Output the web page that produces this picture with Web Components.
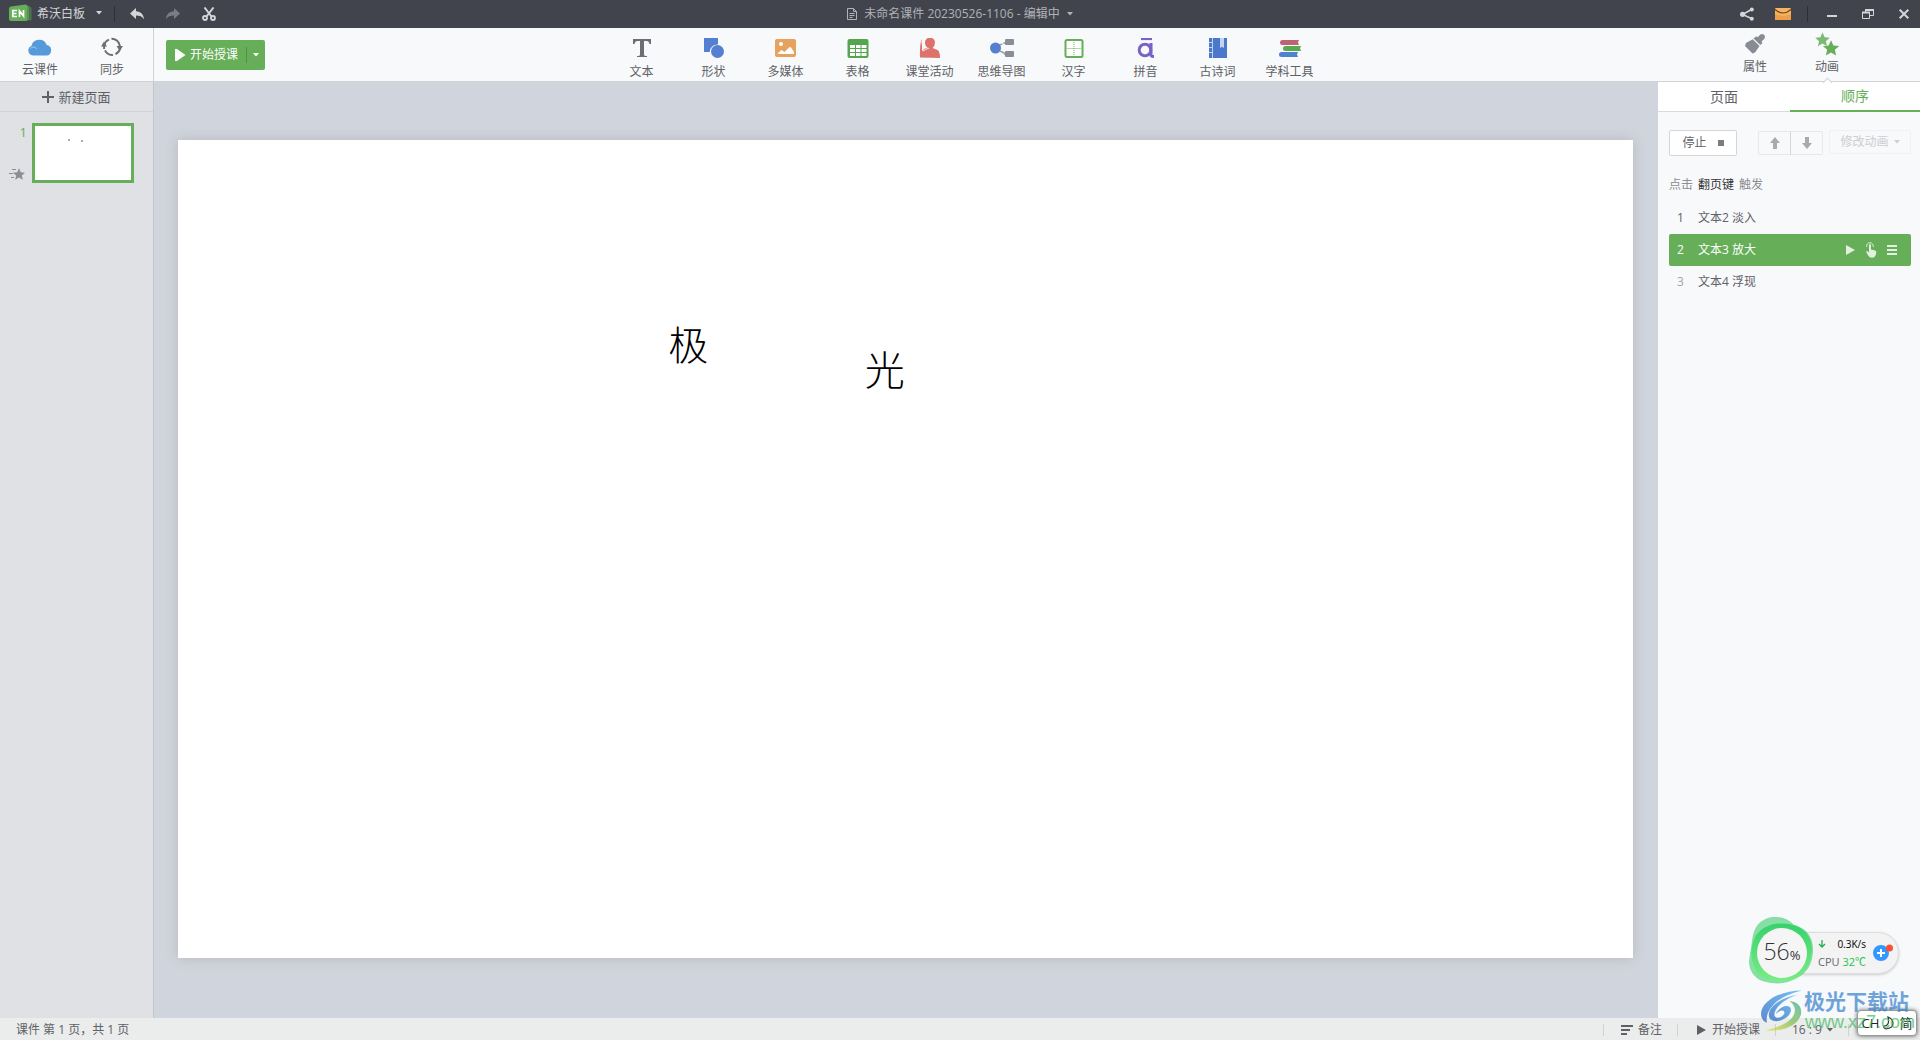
<!DOCTYPE html>
<html lang="zh-CN">
<head>
<meta charset="utf-8">
<title>希沃白板</title>
<style>
  html, body { height: 100%; }
  body {
    margin: 0;
    font: 12px/16px "Open Sans", "Noto Sans CJK SC", sans-serif;
    color: #5f6166;
    --green: #66ae58;
    --line: #d0d2d6;
    --bar: #f7f9fb;
  }
</style>
</head>
<body>
<board-app></board-app>
<script>
const RESET = `
  *, *::before, *::after { box-sizing: border-box; }
  button { font: inherit; color: inherit; background: none; border: 0; padding: 0; margin: 0; cursor: pointer; }
  :host([hidden]) { display: none; }
`;

class BaseElement extends HTMLElement {
  connectedCallback() {
    if (this.shadowRoot) return;
    const tpl = document.createElement('template');
    tpl.innerHTML = `<style>${RESET}${this.styles()}</style>${this.markup()}`;
    this.attachShadow({ mode: 'open' }).append(tpl.content.cloneNode(true));
  }
  styles() { return ''; }
  markup() { return '<slot></slot>'; }
}

const star = 'M0-10 2.9-3.6 9.8-3 4.6 1.6 6.2 8.4 0 4.8-6.2 8.4-4.6 1.6-9.8-3-2.9-3.6Z';

/* name: [width, height, markup] */
const ICONS = {
  logo: [24, 18, '<path d="M21 2.5l1.5 1v12L21 17z" fill="#4e7350"/><path d="M17.500 1l3 1.500v13.500l-3 1z" fill="#5b9156"/><path d="M2 2.500 16.500.500q1.500 0 1.500 1.500v13.500q0 1.500-1.500 1.500H2q-2 0-2-2V4.500q0-1.700 2-2z" fill="#66ae58"/><path d="M8 6.500H3.800v6H8M3.800 9.500h3.700M10.500 13V7l4 5V6" fill="none" stroke="#fff" stroke-width="1.700"/>'],
  caret: [6, 4, '<path d="M0 0h6L3 3.500z" fill="currentColor"/>'],
  undo: [14, 12, '<path d="M6 0v3.200c5 .3 7.600 3.300 8 8-1.800-2.500-4-3.600-8-3.600V11L0 5.400z" fill="currentColor"/>'],
  redo: [14, 12, '<path d="M8 0v3.200c-5 .3-7.600 3.300-8 8 1.800-2.500 4-3.600 8-3.600V11l6-5.600z" fill="currentColor"/>'],
  cut: [14, 14, '<path d="M2.500.500 9.500 9.500M11.500.500 4.500 9.500" stroke="currentColor" stroke-width="2"/><circle cx="3" cy="11" r="2" fill="none" stroke="currentColor" stroke-width="1.800"/><circle cx="11" cy="11" r="2" fill="none" stroke="currentColor" stroke-width="1.800"/>'],
  doc: [10, 12, '<path d="M.500.500h6l3 3v8h-9zM6.500.500v3h3M2.500 5.500h5M2.500 7.500h5M2.500 9.500h3" fill="none" stroke="currentColor"/>'],
  share: [14, 14, '<path d="M11.500 2.500 2.500 7.500l9 4" fill="none" stroke="currentColor" stroke-width="1.500"/><circle cx="11.800" cy="2.400" r="2" fill="currentColor"/><circle cx="2.600" cy="7.300" r="2.600" fill="currentColor"/><circle cx="11.800" cy="11.700" r="2" fill="currentColor"/>'],
  mail: [16, 12, '<rect width="16" height="12" rx="1" fill="#f9b35c"/><path d="M0 12V6l8 2 8-2v6z" fill="#eda04a"/><path d="M0 1.500Q4 5 8 5t8-3.500" fill="none" stroke="#5c4631" stroke-width="1.200"/>'],
  min: [10, 12, '<path d="M0 8h10" stroke="currentColor" stroke-width="2"/>'],
  restore: [12, 10, '<path d="M3.500 3V.500h8v6H8" fill="none" stroke="currentColor"/><path d="M0 3.500h8" stroke="currentColor" stroke-width="2"/><path d="M.500 3.500h7v6h-7z" fill="none" stroke="currentColor"/><path d="M3 1h9" stroke="currentColor" stroke-width="2"/>'],
  close: [10, 10, '<path d="M.700.700l8.600 8.600M9.300.700.700 9.300" stroke="currentColor" stroke-width="2"/>'],
  cloud: [24, 17, '<path d="M5 16.500a5 5 0 0 1-1.600-9.600 8 8 0 0 1 15.300-.8A5.300 5.300 0 0 1 19 16.500z" fill="#559bdb"/><path d="M2.500 9.500c2.500-2.300 5-1.500 6.200.500" fill="none" stroke="#a9cdf0" stroke-width="1"/>'],
  sync: [22, 20, '<path d="M3.100 12V9.500A8 8 0 0 1 8 2.600M10.500 1.800a8 8 0 0 1 8.200 6.700v2M18.900 12a8 8 0 0 1-4.500 5.200M12 17.900a8 8 0 0 1-8-4.500" fill="none" stroke="#6c6e73" stroke-width="2"/><path d="M0 9.500 3 4.500l3 5zM15.500 9h6.500l-3.200 5z" fill="#6c6e73"/>'],
  playWhite: [11, 12, '<path d="M0 0h2l8.500 6L2 12H0z" fill="currentColor"/>'],
  text: [20, 20, '<path d="M1 1h18v5h-1.500Q17 3 14.500 3H12v13.500q0 1.500 3 1.500v1H5v-1q3 0 3-1.500V3H5.500Q3 3 2.500 6H1z" fill="#6c6e73"/>'],
  shape: [20, 20, '<path d="M0 0h14v6.500A7.500 7.500 0 0 0 5.700 14H0z" fill="#557fd0"/><circle cx="13.500" cy="13.500" r="6.500" fill="#557fd0"/>'],
  media: [22, 20, '<rect y="1" width="21" height="18" rx="2" fill="#e6a25e"/><circle cx="6" cy="6" r="2" fill="#fff"/><path d="M3 16v-1l3.500-3 3 2 4.500-4.500q1-.8 2 0l3 4.500v2z" fill="#fff"/>'],
  table: [22, 20, '<rect x=".500" y="1" width="21" height="19" rx="2" fill="#55a54e"/><path d="M3 7h5v3H3zM9 7h4.500v3H9zM14.500 7h5v3h-5zM3 11h5v3H3zM9 11h4.500v3H9zM14.500 11h5v3h-5zM3 15h5v3H3zM9 15h4.500v3H9zM14.500 15h5v3h-5z" fill="#fff"/>'],
  activity: [22, 20, '<path d="M1 19.500Q.500 10 2 2.500l1-1v11l3-2 3-.500q-3-2-3-5.500a4.800 4.800 0 0 1 10 0q0 3.500-2.500 5.500l5 2q2.500 1.500 2.500 8z" fill="#db736c"/><path d="M2.500 2.500Q4 8 3.800 13l5.500-2.800 1 1" fill="none" stroke="#f7f9fb" stroke-width=".8"/>'],
  mind: [24, 20, '<path d="M5 9 17 4M14 16l3 .500M10 13l6 3" stroke="#9aa0a8" stroke-width="1.500" stroke-dasharray="8 1"/><circle cx="5.500" cy="10" r="5.500" fill="#557fd0"/><rect x="15" y="1" width="9" height="6" rx="1" fill="#888e98"/><rect x="15" y="13" width="9" height="6" rx="1" fill="#888e98"/>'],
  hanzi: [20, 20, '<rect x="1.500" y="2" width="17" height="17" rx="1.500" fill="#fff" stroke="#66ae58" stroke-width="2"/><path d="M10 4v13M3.500 10.500h13" stroke="#66ae58" stroke-dasharray="1 1"/>'],
  pinyin: [18, 20, '<path d="M4 1h11" stroke="#7a62c9" stroke-width="2.200"/><circle cx="8" cy="12" r="5.800" fill="none" stroke="#7a62c9" stroke-width="3"/><path d="M14 5v12q0 1.600 3 1.500" fill="none" stroke="#7a62c9" stroke-width="3"/>'],
  poem: [18, 20, '<path d="M0 0h18v20H0z" fill="#4c78cc"/><path d="M3.500 0v20M0 4.500h3M0 9.500h3M0 14.500h3" stroke="#c3d2ef"/><path d="M11 0h4v10l-2-1.300L11 10z" fill="#c6d4f0"/>'],
  tools: [22, 20, '<path d="M3.500 2h16.500l-1 2.500 1 2.500H3.500a2.500 2.500 0 0 1 0-5z" fill="#bf6276"/><path d="M6.500 8h15.500l-1 2.500 1 2.500H6.500a2.500 2.500 0 0 1 0-5z" fill="#57ab4d"/><path d="M2.500 14h16.500l-1 2.500 1 2.500H2.500a2.500 2.500 0 0 1 0-5z" fill="#5480d2"/>'],
  brush: [20, 20, '<path d="M18 0l2 2-.500 2.800-3 2.700 1 1.500-2.200 2L8.500 4.500 11 2.500l2 .500 2.300-2.500z" fill="#888b91"/><path d="M7.700 5.200l6.800 6.800-4.500 6.500-2.500 1L0 12l1-3z" fill="#888b91"/>'],
  stars: [24, 24, `<path transform="translate(7.500 8) scale(.74)" d="${star}" fill="#66ae58" opacity=".85"/><path transform="translate(16 16.500) scale(.83)" d="${star}" fill="#66ae58" stroke="#f7f9fb" stroke-width="1.500" paint-order="stroke"/>`],
  plus: [12, 12, '<path d="M6 0v12M0 6h12" stroke="#5f6166" stroke-width="2"/>'],
  flyStar: [16, 12, `<path transform="translate(10 6.500) scale(.62)" d="${star}" fill="#8b8e94"/><path d="M3 1.500h4M0 5.500h4M2 9.500h3" stroke="#8b8e94"/>`],
  stop: [6, 6, '<path d="M0 0h6v6H0z" fill="#7c7c7c"/>'],
  up: [10, 12, '<path d="M5 0l5 6H7v6H3V6H0z" fill="#a8aaac"/>'],
  down: [10, 12, '<path d="M5 12 0 6h3V0h4v6h3z" fill="#a8aaac"/>'],
  play: [9, 10, '<path d="M0 0l9 5-9 5z" fill="currentColor"/>'],
  tap: [12, 16, '<path d="M4 8V2.800q1-1.600 2 0V7.500l4 1q1.500.500 1.300 2-.3 2.800-1.800 4.500Q7 16.500 4.500 15 2 12.500 1.200 9.500l1-.500L4 10.500z" fill="currentColor"/><path d="M1.800 5a3.300 3.300 0 1 1 6.300 0" fill="none" stroke="currentColor"/>'],
  menu: [10, 10, '<path d="M0 1h10M0 5h10M0 9h10" stroke="currentColor" stroke-width="2"/>'],
  notes: [12, 10, '<path d="M0 1h12M0 5h9M0 9h6" stroke="currentColor" stroke-width="2"/>'],
  arrowDown: [8, 8, '<path d="M4 0v7M1 4l3 3 3-3" fill="none" stroke="#1fb04a" stroke-width="1.300"/>'],
  add: [20, 17, '<circle cx="8" cy="9" r="8" fill="#3397ff"/><path d="M8 5v8M4 9h8" stroke="#fff" stroke-width="2"/><circle cx="16.500" cy="4" r="3.500" fill="#fb5032"/>'],
  moon: [12, 14, '<path d="M5 1q5 2 5 6.500T3 13Q0 12 1 10q6 0 4-9z" fill="none" stroke="#333" stroke-width="1.200"/>']
};

customElements.define('ui-icon', class extends BaseElement {
  styles() { return ':host { display: inline-flex; flex: none; } svg { display: block; }'; }
  markup() {
    const [w, h, body] = ICONS[this.getAttribute('name')];
    return `<svg width="${w}" height="${h}" viewBox="0 0 ${w} ${h}" aria-hidden="true">${body}</svg>`;
  }
});

customElements.define('title-bar', class extends BaseElement {
  styles() { return `
    :host { display: grid; grid-template-columns: 1fr auto 1fr; height: 28px; background: #42444d; color: #d5d6da; }
    div { display: flex; align-items: center; }
    button { display: flex; align-items: center; justify-content: center; height: 28px; }
    .tools { gap: 4px; }
    .tools button { width: 32px; }
    .tools .brand { gap: 4px; width: auto; padding-left: 9px; margin-right: 8px; }
    .brand span { margin-right: 7px; }
    .brand ui-icon { margin-top: -2px; }
    .sep { width: 1px; height: 16px; background: #2d2f36; margin: 0 4px; }
    .lead .sep { margin: 0 2px 0 0; }
    .end { justify-content: flex-end; }
    .off { color: #7b7d85; }
    .name { gap: 7px; color: #b0b2b8; }
  `; }
  markup() { return `
    <div class="tools lead">
      <button class="brand"><ui-icon name="logo"></ui-icon><span>希沃白板</span><ui-icon name="caret"></ui-icon></button>
      <span class="sep"></span>
      <button aria-label="撤销"><ui-icon name="undo"></ui-icon></button>
      <button aria-label="重做" class="off" disabled><ui-icon name="redo"></ui-icon></button>
      <button aria-label="剪切"><ui-icon name="cut"></ui-icon></button>
    </div>
    <button class="name"><ui-icon name="doc"></ui-icon><span>未命名课件 20230526-1106 - 编辑中</span><ui-icon name="caret"></ui-icon></button>
    <div class="tools end">
      <button aria-label="分享"><ui-icon name="share"></ui-icon></button>
      <button aria-label="消息"><ui-icon name="mail"></ui-icon></button>
      <span class="sep"></span>
      <button aria-label="最小化"><ui-icon name="min"></ui-icon></button>
      <button aria-label="还原"><ui-icon name="restore"></ui-icon></button>
      <button aria-label="关闭"><ui-icon name="close"></ui-icon></button>
    </div>`; }
});

customElements.define('tool-item', class extends BaseElement {
  styles() { return `
    :host { display: block; width: 72px; }
    button { display: flex; flex-direction: column; align-items: center; width: 100%; gap: var(--tool-gap, 4px); }
    ui-icon { height: 22px; align-items: center; }
  `; }
  markup() { return `<button><ui-icon name="${this.getAttribute('icon')}"></ui-icon><span><slot></slot></span></button>`; }
});

customElements.define('start-button', class extends BaseElement {
  styles() { return `
    :host { display: flex; align-items: center; height: 30px; border-radius: 2px; background: var(--green); color: #fff; }
    button { display: flex; align-items: center; justify-content: center; height: 30px; }
    .go { gap: 4px; padding: 0 8px 0 9px; }
    .more { width: 19px; height: 16px; border-left: 1px solid #528f47; }
  `; }
  markup() { return `<button class="go"><ui-icon name="playWhite"></ui-icon><slot></slot></button><button class="more" aria-label="更多"><ui-icon name="caret"></ui-icon></button>`; }
});

customElements.define('tool-bar', class extends BaseElement {
  styles() { return `
    :host { display: grid; grid-template-columns: 1fr auto 1fr; height: 54px; background: var(--bar); border-bottom: 1px solid var(--line); }
    div { display: flex; align-items: flex-start; }
    .file { width: 154px; height: 53px; padding: 8px 0 0 4px; border-right: 1px solid var(--line); }
    .lead { gap: 12px; }
    .lead start-button { margin-top: 12px; }
    .insert { padding: 9px 0 0 11px; --tool-gap: 5px; }
    .end { justify-content: flex-end; padding: 5px 57px 0 0; }
    .active { position: relative; }
    .active::after { content: ""; position: absolute; left: 33px; top: 46px; width: 7px; height: 7px; transform: rotate(45deg); background: #fff; border: solid var(--line); border-width: 1px 0 0 1px; }
  `; }
  markup() { return `
    <div class="lead">
      <div class="file"><tool-item icon="cloud">云课件</tool-item><tool-item icon="sync">同步</tool-item></div>
      <start-button>开始授课</start-button>
    </div>
    <div class="insert">
      <tool-item icon="text">文本</tool-item><tool-item icon="shape">形状</tool-item><tool-item icon="media">多媒体</tool-item>
      <tool-item icon="table">表格</tool-item><tool-item icon="activity">课堂活动</tool-item><tool-item icon="mind">思维导图</tool-item>
      <tool-item icon="hanzi">汉字</tool-item><tool-item icon="pinyin">拼音</tool-item><tool-item icon="poem">古诗词</tool-item><tool-item icon="tools">学科工具</tool-item>
    </div>
    <div class="end"><tool-item icon="brush">属性</tool-item><tool-item class="active" icon="stars">动画</tool-item></div>`; }
});

customElements.define('page-list', class extends BaseElement {
  styles() { return `
    :host { display: block; width: 154px; background: #dfe1e5; border-right: 1px solid #c3c6cc; }
    .new { display: flex; align-items: center; justify-content: center; gap: 4px; width: 100%; height: 30px; font-size: 13px; border-bottom: 1px solid var(--line); }
    .page { display: grid; grid-template-columns: 18px 102px; gap: 5px; padding: 11px 0 0 9px; }
    .side { display: flex; flex-direction: column; justify-content: space-between; color: var(--green); padding: 1px 0 3px; }
    .side span { font-size: 13px; align-self: flex-end; }
    .thumb { display: flex; gap: 11px; height: 60px; padding: 13px 33px; background: #fff; border: 3px solid var(--green); }
    i { width: 2px; height: 2px; background: #aaa; }
    i + i { margin-top: 1px; }
  `; }
  markup() { return `
    <button class="new"><ui-icon name="plus"></ui-icon><span>新建页面</span></button>
    <div class="page">
      <div class="side"><span>1</span><ui-icon name="flyStar"></ui-icon></div>
      <button class="thumb" aria-label="第 1 页"><i></i><i></i></button>
    </div>`; }
});

customElements.define('slide-stage', class extends BaseElement {
  styles() { return `
    :host { display: flex; align-items: center; min-width: 0; padding: 0 25px 2px 24px; background: #d0d4dc; }
    .slide { position: relative; width: 100%; aspect-ratio: 16 / 9; background: #fff; box-shadow: 0 0 12px rgba(90, 95, 80, .22); color: #000; }
    .text { position: absolute; font: 300 40px/40px "Noto Sans CJK SC", sans-serif; }
    .first { left: 33.7%; top: 22.4%; }
    .second { left: 47.2%; top: 25.5%; }
  `; }
  markup() { return '<div class="slide"><div class="text first">极</div><div class="text second">光</div></div>'; }
});

customElements.define('step-row', class extends BaseElement {
  styles() { return `
    :host { display: flex; align-items: center; height: 32px; padding: 0 14px 0 8px; border-radius: 2px; }
    .num { width: 21px; }
    .label { flex: 1; }
    .acts { display: none; align-items: center; gap: 10px; color: #e2f0df; }
    .acts button { display: flex; }
    :host([dim]) .num { color: #a3a5a8; }
    :host([selected]) { background: var(--green); color: #fff; }
    :host([selected]) .acts { display: flex; }
  `; }
  markup() { return `<span class="num">${this.getAttribute('num')}</span><span class="label"><slot></slot></span>
    <span class="acts"><button aria-label="播放"><ui-icon name="play"></ui-icon></button><button aria-label="触发"><ui-icon name="tap"></ui-icon></button><button aria-label="菜单"><ui-icon name="menu"></ui-icon></button></span>`; }
});

customElements.define('animation-panel', class extends BaseElement {
  styles() { return `
    :host { display: block; width: 262px; background: var(--bar); }
    .tabs { display: grid; grid-template-columns: 132px 1fr; height: 30px; background: #fff; font-size: 14px; }
    .tabs button { border-bottom: 1px solid #d8dadd; }
    .tabs [aria-selected=true] { color: var(--green); border-bottom: 2px solid var(--green); }
    .body { padding: 18px 9px 0 11px; }
    .ctl { display: flex; align-items: center; height: 26px; }
    .ctl button { display: flex; align-items: center; justify-content: center; border: 1px solid #e6e8ea; border-radius: 2px; height: 24px; }
    .ctl .stop { gap: 11px; width: 68px; height: 26px; background: #fff; border-color: #d4d6d8; }
    .move { display: flex; margin: 0 6px 0 21px; }
    .move button { width: 33px; border-radius: 2px 0 0 2px; }
    .move button + button { border-radius: 0 2px 2px 0; border-left-color: #d4d6d8; margin-left: -1px; }
    .ctl .edit { flex: 1; gap: 5px; color: #ccced1; border-color: #f0f1f3; align-self: flex-start; }
    p { margin: 21px 0 9px; color: #8b8d91; display: flex; gap: 5px; }
    b { font-weight: 400; color: #333; }
  `; }
  markup() { return `
    <div class="tabs" role="tablist"><button role="tab" aria-selected="false">页面</button><button role="tab" aria-selected="true">顺序</button></div>
    <div class="body">
      <div class="ctl">
        <button class="stop"><span>停止</span><ui-icon name="stop"></ui-icon></button>
        <div class="move"><button aria-label="上移"><ui-icon name="up"></ui-icon></button><button aria-label="下移"><ui-icon name="down"></ui-icon></button></div>
        <button class="edit" disabled><span>修改动画</span><ui-icon name="caret"></ui-icon></button>
      </div>
      <p><span>点击</span><b>翻页键</b><span>触发</span></p>
      <step-row num="1">文本2 淡入</step-row>
      <step-row num="2" selected>文本3 放大</step-row>
      <step-row num="3" dim>文本4 浮现</step-row>
    </div>`; }
});

customElements.define('status-bar', class extends BaseElement {
  styles() { return `
    :host { display: flex; align-items: center; justify-content: space-between; height: 22px; padding: 1px 71px 0 16px; background: #ebecec; }
    div { display: flex; align-items: center; }
    button { display: flex; align-items: center; gap: 5px; height: 12px; padding-left: 17px; border-left: 1px solid #cfd1d3; }
    .notes { width: 74px; }
    .start { width: 98px; padding-left: 19px; gap: 6px; }
    .ratio { width: 74px; padding-left: 16px; border-right: 1px solid #cfd1d3; }
  `; }
  markup() { return `
    <span>课件 第 1 页，共 1 页</span>
    <div>
      <button class="notes"><ui-icon name="notes"></ui-icon><span>备注</span></button>
      <button class="start"><ui-icon name="play"></ui-icon><span>开始授课</span></button>
      <button class="ratio"><span>16 : 9</span><ui-icon name="caret"></ui-icon></button>
    </div>`; }
});

customElements.define('monitor-widget', class extends BaseElement {
  styles() { return `
    :host { position: absolute; right: 21px; bottom: 55px; display: flex; align-items: center; font-size: 11px; line-height: 16px; }
    .ball { position: relative; z-index: 1; width: 66px; height: 68px; flex: none; }
    .ball svg { position: absolute; left: 0; top: 0; }
    .ball span { position: absolute; inset: 0; display: flex; align-items: baseline; justify-content: center; padding-top: 19px; font: 300 23px/30px "Open Sans", sans-serif; color: #333; }
    small { font-size: 13px; font-weight: 400; }
    .pill { display: flex; align-items: center; gap: 7px; height: 42px; margin: 3px 0 0 -35px; padding: 0 5px 0 37px; border-radius: 0 21px 21px 0; background: #f3f3f3; border: 1px solid #ddd; box-shadow: 0 1px 3px rgba(0,0,0,.18); }
    .data { width: 48px; }
    .data div { display: flex; align-items: center; justify-content: space-between; white-space: nowrap; height: 18px; color: #666872; }
    .data .net { font-size: 10px; color: #000; }
    em { font-style: normal; color: #1dc550; }
  `; }
  markup() { return `
    <div class="ball">
      <svg width="66" height="68" viewBox="0 0 66 68"><defs><linearGradient id="g" x2="0" y2="1"><stop stop-color="#28cf62"/><stop offset="1" stop-color="#76f07c"/></linearGradient></defs>
        <path d="M3 24Q5 3 23 0q14-1 22 8 17 4 19 22 1 22-16 31-16 9-35 3Q0 58 0 44z" fill="#3ecd6e" opacity=".6"/>
        <path d="M6 20Q16 4 40 7q22 4 23 25-1 20-17 30Q26 68 10 58-3 40 6 20z" fill="url(#g)" opacity=".85"/>
        <circle cx="33" cy="36" r="25" fill="#f5f5f5"/></svg>
      <span>56<small>%</small></span>
    </div>
    <div class="pill"><div class="data"><div class="net"><ui-icon name="arrowDown"></ui-icon><span>0.3K/s</span></div><div><span>CPU</span><em>32℃</em></div></div><ui-icon name="add"></ui-icon></div>`; }
});

customElements.define('input-badge', class extends BaseElement {
  styles() { return `
    :host { position: absolute; right: 3px; bottom: 4px; display: flex; align-items: center; justify-content: center; gap: 4px; width: 60px; height: 26px; background: #fff; border: 1px solid #999; border-radius: 4px; box-shadow: 0 0 4px rgba(0,0,0,.6); color: #222; font-size: 13px; }
  `; }
  markup() { return '<span>CH</span><ui-icon name="moon"></ui-icon><span>简</span>'; }
});

customElements.define('site-mark', class extends BaseElement {
  styles() { return `
    :host { position: absolute; right: 9px; bottom: 7px; display: flex; align-items: flex-start; opacity: .7; pointer-events: none; white-space: nowrap; width: 150px; }
    svg { flex: none; }
    div { display: flex; flex-direction: column; }
    .cn { font: 700 21px/22px "Noto Sans CJK SC", sans-serif; color: #3480cc; }
    .url { font: 400 18px/22px "Liberation Sans", sans-serif; color: #3dbb62; margin-left: 1px; }
  `; }
  markup() { return `
    <svg width="43" height="44" viewBox="0 0 44 44"><defs><linearGradient id="b" x1="1" x2="0" y2="1"><stop stop-color="#3cabee"/><stop offset="1" stop-color="#1c5ec0"/></linearGradient><linearGradient id="y" x1="1" x2="0" y2="1"><stop stop-color="#2fa88a"/><stop offset=".5" stop-color="#7cbe48"/><stop offset="1" stop-color="#efdf3e"/></linearGradient></defs>
      <path d="M42 1C22 1 2 10 0 24q0 8 6 10C4 22 15 7 42 1z" fill="url(#b)"/>
      <path d="M38 5C20 8 7 18 8 27c1 7 12 7 19 1 6-6 4-11-1-11-4 0-9 4-11 8 4-4 9-5 9-1-1 4-8 7-10 3C12 20 24 9 38 5z" fill="url(#b)"/>
      <path d="M29 12c8 0 13 5 12 13-3 13-20 18-36 17 15-4 26-9 29-17 2-6-1-11-5-13z" fill="url(#y)"/></svg>
    <div><span class="cn">极光下载站</span><span class="url">www.xz7.com</span></div>`; }
});

customElements.define('board-app', class extends BaseElement {
  styles() { return `
    :host { position: relative; display: flex; flex-direction: column; height: 100%; overflow: hidden; }
    main { display: grid; grid-template-columns: auto 1fr auto; flex: 1; min-height: 0; }
  `; }
  markup() { return `
    <title-bar></title-bar>
    <tool-bar></tool-bar>
    <main><page-list></page-list><slide-stage></slide-stage><animation-panel></animation-panel></main>
    <status-bar></status-bar>
    <monitor-widget></monitor-widget>
    <input-badge></input-badge>
    <site-mark></site-mark>`; }
});
</script>
</body>
</html>
